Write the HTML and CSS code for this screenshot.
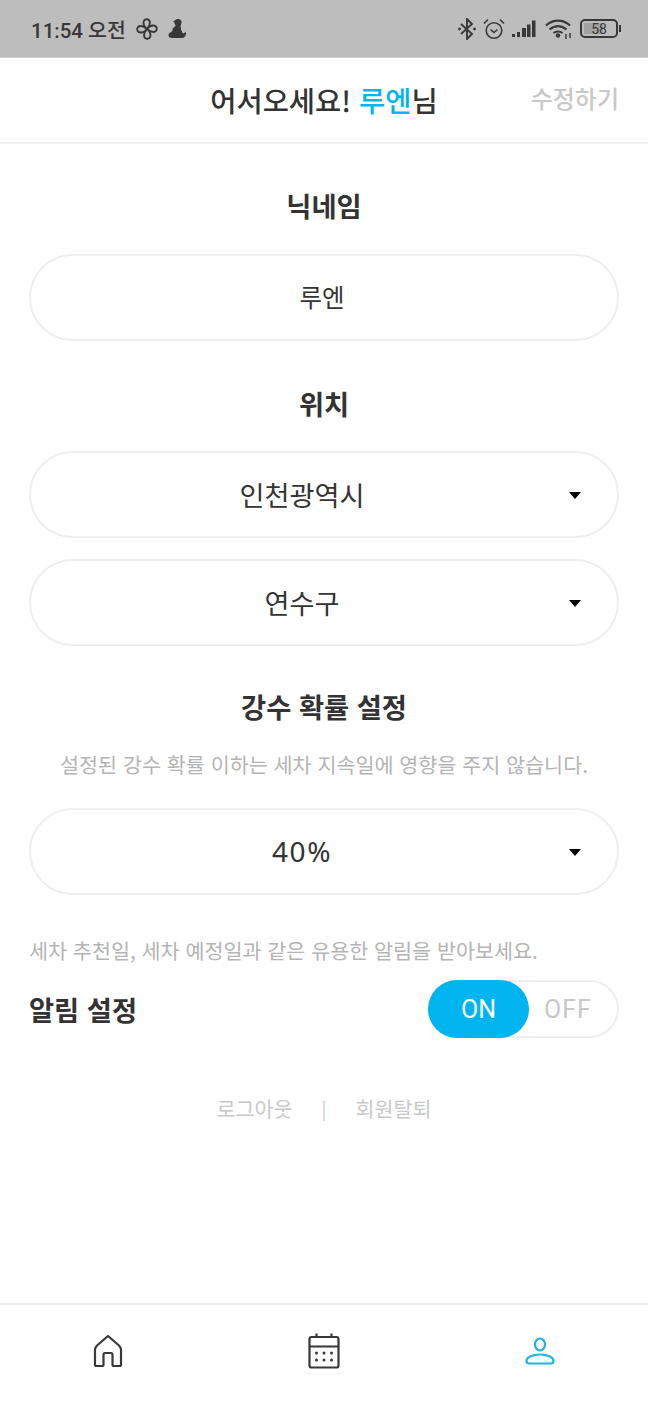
FILE: index.html
```html
<!DOCTYPE html>
<html lang="ko">
<head>
    <meta charset="UTF-8">
    <title>설정</title>
    <link rel="stylesheet" href="styles.css">
</head>
<body>
<div id="container">
    <div id="status">
        <div class="status-left">
            <span class="clock">11:54 오전</span>
            <svg class="ic-fan" width="22" height="22" viewBox="0 0 22 22" fill="none" stroke="#383838" stroke-width="1.900">
                <path d="M11 11C7 8.500 6 1.500 10.500 1.200C15 1 15 7 11 11ZM11 11C13.500 7 20.500 6 20.800 10.500C21 15 15 15 11 11ZM11 11C15 13.500 16 20.500 11.500 20.800C7 21 7 15 11 11ZM11 11C8.500 15 1.500 16 1.200 11.500C1 7 7 7 11 11Z"/>
            </svg>
            <svg class="ic-pet" width="18" height="21" viewBox="0 0 18 21" fill="#383838">
                <circle cx="10" cy="4.500" r="3.500"/>
                <path d="M5 3.500L8 2V6ZM8 7H12.500L13 11.500L14.500 15C15.500 16 17 15 17 13.500L18 15C18 18.500 16 20 14 20H4C0.500 20 -0.500 17 1.500 15C4 13.500 5 12.500 4.500 11C5 9.500 7 9 8 7Z"/>
            </svg>
        </div>
        <div class="status-right">
            <svg class="ic-bt" width="18" height="22" viewBox="0 0 18 22" fill="none" stroke="#383838" stroke-width="1.900">
                <path d="M3 6L14 16L9 21V1L14 6L3 16"/>
                <circle cx="1.500" cy="11" r="1.400" fill="#383838" stroke="none"/>
                <circle cx="16.500" cy="11" r="1.400" fill="#383838" stroke="none"/>
            </svg>
            <svg class="ic-alarm" width="22" height="22" viewBox="0 0 22 22" fill="none" stroke="#383838" stroke-width="1.600">
                <circle cx="11" cy="12.500" r="7.800"/>
                <path d="M7.500 11.500L11 14.500L14.500 11.500M1 5.500L5 1.500M21 5.500L17 1.500"/>
            </svg>
            <svg class="ic-signal" width="25" height="18" viewBox="0 0 25 18" fill="#383838">
                <rect x="1" y="14" width="3" height="3"/>
                <rect x="6" y="12" width="3" height="5"/>
                <rect x="11" y="8" width="4" height="9"/>
                <rect x="16" y="4.500" width="3.500" height="12.500"/>
                <rect x="21" y="0.500" width="3.500" height="16.500"/>
            </svg>
            <svg class="ic-wifi" width="27" height="21" viewBox="0 0 27 21" fill="none" stroke="#383838" stroke-width="2.200">
                <path d="M1 7.500C8 1 18 1 25 7.500M4.500 11.500C10 7 16 7 21.500 11.500M8.500 15C11 13 15 13 17.500 15"/>
                <circle cx="13" cy="17.500" r="2.200" fill="#383838" stroke="none"/>
                <path d="M21 16V21M25 15V20" stroke-width="1.500"/>
            </svg>
            <div class="battery">
                <div class="battery-body"><span class="battery-fill"></span><span class="battery-num">58</span></div>
                <span class="battery-cap"></span>
            </div>
        </div>
    </div>

    <div id="header">
        <h1 class="welcome">어서오세요! <span class="point">루엔</span>님</h1>
        <a class="edit">수정하기</a>
    </div>

    <div id="content">
        <h2 class="label">닉네임</h2>
        <div class="field name">루엔</div>

        <h2 class="label loc">위치</h2>
        <div class="field select"><span>인천광역시</span><i class="arrow"></i></div>
        <div class="field select second"><span>연수구</span><i class="arrow"></i></div>

        <h2 class="label rain">강수 확률 설정</h2>
        <p class="desc center">설정된 강수 확률 이하는 세차 지속일에 영향을 주지 않습니다.</p>
        <div class="field select"><span class="num">40%</span><i class="arrow"></i></div>

        <p class="desc notice">세차 추천일, 세차 예정일과 같은 유용한 알림을 받아보세요.</p>
        <div class="alarm">
            <h2 class="label left">알림 설정</h2>
            <div class="toggle">
                <span class="on">ON</span>
                <span class="off">OFF</span>
            </div>
        </div>

        <div class="links">
            <a>로그아웃</a>
            <b>|</b>
            <a>회원탈퇴</a>
        </div>
    </div>

    <div id="nav">
        <svg width="32" height="34" viewBox="0 0 32 34" fill="none" stroke="#383838" stroke-width="2.200" stroke-linejoin="round">
            <path d="M16 2L27 11.500C28.500 13 29 13.500 29 15.500V30.500C29 31.500 28.500 32 27.500 32H22C21 32 20.500 31.500 20.500 30.500V20.500C20.500 19.500 20 19 19 19H13C12 19 11.500 19.500 11.500 20.500V30.500C11.500 31.500 11 32 10 32H4.500C3.500 32 3 31.500 3 30.500V15.500C3 13.500 3.500 13 5 11.500Z"/>
        </svg>
        <svg width="32" height="36" viewBox="0 0 32 36" fill="none" stroke="#383838" stroke-width="2.200">
            <rect x="1.500" y="4" width="29" height="30.500" rx="2"/>
            <path d="M1.500 13.500H30.500M8.500 0.500V4M23.500 0.500V4"/>
            <g fill="#383838" stroke="none">
                <circle cx="8.500" cy="20" r="1.500"/><circle cx="16" cy="20" r="1.500"/><circle cx="23.500" cy="20" r="1.500"/>
                <circle cx="8.500" cy="27" r="1.500"/><circle cx="16" cy="27" r="1.500"/><circle cx="23.500" cy="27" r="1.500"/>
            </g>
        </svg>
        <svg width="30" height="28" viewBox="0 0 30 28" fill="none" stroke="#1fb2e4" stroke-width="2.200">
            <ellipse cx="15" cy="7.500" rx="5" ry="6"/>
            <path d="M4 26.500C2 26.500 1.500 25.500 1.500 24C1.500 20 8 17.500 15 17.500C22 17.500 28.500 20 28.500 24C28.500 25.500 28 26.500 26 26.500Z"/>
        </svg>
    </div>
</div>
</body>
</html>
```

FILE: styles.css
```css
* {
    margin: 0;
    padding: 0;
    box-sizing: border-box;
}

body {
    font-family: "Noto Sans CJK KR", "Noto Sans", sans-serif;
    color: #333;
    background: #fff;
}

#container {
    width: 648px;
    height: 1404px;
    display: flex;
    flex-direction: column;
}

/* status bar */
#status {
    height: 58px;
    background: #bdbdbd;
    border-bottom: 1px solid #d2d2d2;
    display: flex;
    align-items: center;
    justify-content: space-between;
    padding: 0 27px 0 31px;
    flex-shrink: 0;
}

.status-left, .status-right {
    display: flex;
    align-items: center;
}

.ic-fan {
    margin-left: 10px;
}

.ic-pet {
    margin-left: 10px;
}

.clock {
    font-family: Roboto, "Noto Sans CJK KR", sans-serif;
    font-size: 20.500px;
    font-weight: 500;
    color: #383838;
}

.ic-alarm {
    margin-left: 7px;
}

.ic-signal {
    margin-left: 6px;
}

.ic-wifi {
    margin-left: 9px;
}

.battery {
    display: flex;
    align-items: center;
    margin-left: 8px;
}

.battery-body {
    width: 38px;
    height: 19px;
    border: 2px solid #383838;
    border-radius: 5px;
    position: relative;
    display: flex;
    align-items: center;
    justify-content: center;
}

.battery-fill {
    position: absolute;
    left: 2px;
    top: 2px;
    bottom: 2px;
    width: 55%;
    background: #a3a3a3;
}

.battery-num {
    position: relative;
    font-family: Roboto, sans-serif;
    font-size: 14px;
    color: #383838;
    line-height: 1;
}

.battery-cap {
    width: 2px;
    height: 7px;
    margin-left: 1px;
    background: #383838;
}

/* header */
#header {
    height: 86px;
    border-bottom: 2px solid #eee;
    display: flex;
    align-items: center;
    justify-content: center;
    position: relative;
    flex-shrink: 0;
}

.welcome {
    font-size: 28.500px;
    font-weight: 500;
    color: #333;
    margin-top: -2px;
}

.point {
    color: #00b5ef;
}

.edit {
    position: absolute;
    right: 29px;
    top: 22px;
    font-size: 24px;
    font-weight: 500;
    color: #c8c8c8;
}

/* content */
#content {
    flex: 1;
    padding: 0 29px;
}

.label {
    font-size: 27.300px;
    font-weight: 700;
    text-align: center;
    color: #333;
    line-height: 38px;
    margin-top: 42px;
}

.label.loc {
    margin-top: 43px;
}

.label.rain {
    margin-top: 41px;
}

.label.left {
    margin: 0;
    text-align: left;
}

.field {
    height: 87px;
    border: 2px solid #eee;
    border-radius: 44px;
    display: flex;
    align-items: center;
    justify-content: center;
    margin-top: 30px;
    font-size: 24.500px;
    color: #333;
    position: relative;
    padding: 0 4px 2px 0;
}

.field.select {
    font-size: 27.200px;
    margin-top: 29px;
    padding-right: 44px;
}

.field.second {
    margin-top: 21px;
}

.num {
    font-family: "Noto Sans", sans-serif;
    font-size: 28px;
    letter-spacing: 1.500px;
}

.arrow {
    position: absolute;
    right: 36px;
    top: 39px;
    width: 0;
    height: 0;
    border-left: 6.500px solid transparent;
    border-right: 6.500px solid transparent;
    border-top: 7.500px solid #000;
}

.desc {
    font-size: 20.700px;
    color: #b4b4b4;
    line-height: 30px;
}

.desc.center {
    text-align: center;
    margin-top: 24px;
}

.desc.center + .field {
    margin-top: 29px;
}

.desc.notice {
    margin-top: 40px;
}

.alarm {
    display: flex;
    align-items: center;
    justify-content: space-between;
    margin-top: 15px;
}

.toggle {
    width: 191px;
    height: 58px;
    border: 2px solid #eee;
    border-radius: 29px;
    display: flex;
    align-items: center;
    position: relative;
}

.toggle .on {
    position: absolute;
    left: -2px;
    top: -2px;
    width: 101px;
    height: 58px;
    border-radius: 29px;
    background: #00b5ef;
    color: #fff;
    font-family: Roboto, sans-serif;
    font-size: 25px;
    display: flex;
    align-items: center;
    justify-content: center;
}

.toggle .off {
    margin-left: 114px;
    color: #c8c8c8;
    font-family: Roboto, sans-serif;
    font-size: 25px;
    letter-spacing: 1px;
}

.links {
    display: flex;
    justify-content: center;
    align-items: center;
    gap: 29px;
    margin-top: 55px;
    font-size: 20.700px;
    color: #c8c8c8;
}

.links b {
    font-weight: 400;
    font-size: 18px;
}

/* bottom nav */
#nav {
    height: 101px;
    border-top: 2px solid #eee;
    display: grid;
    grid-template-columns: repeat(3, 1fr);
    justify-items: center;
    align-items: center;
    padding: 0 0 8px;
    flex-shrink: 0;
}
```
